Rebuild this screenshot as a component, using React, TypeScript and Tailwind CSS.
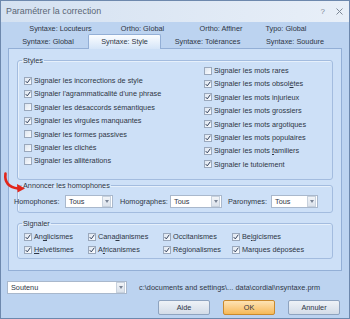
import React from 'react';

const font = "font-['Liberation_Sans',Arial,sans-serif]";

const Check = ({ on }: { on: boolean }) => (
  <span className="w-[8px] h-[8px] border border-[#9aa8bc] bg-gradient-to-br from-[#dde5ef] to-[#fbfcfe] flex items-center justify-center shrink-0">
    {on && (
      <svg width="6" height="6" viewBox="0 0 6 6">
        <path d="M0.7 3.1 L2.3 4.9 L5.3 0.7" fill="none" stroke="#34435e" strokeWidth="1" />
      </svg>
    )}
  </span>
);

const Opt = ({ on, children }: { on: boolean; children: React.ReactNode }) => (
  <div className="h-[13.4px] flex items-center gap-[2px] whitespace-nowrap">
    <Check on={on} />
    <span>{children}</span>
  </div>
);

const Combo = ({ w, value }: { w: string; value: string }) => (
  <div className={`${w} h-[13px] bg-white border border-[#a9b8cc] flex items-center`}>
    <span className="flex-1 pl-[3px] whitespace-nowrap overflow-hidden">{value}</span>
    <span className="w-[9px] h-[11px] mr-[1px] bg-gradient-to-b from-[#f1f4f8] to-[#dbe2eb] border border-[#c7d1dd] flex items-center justify-center">
      <svg width="4" height="3" viewBox="0 0 4 3">
        <path d="M0 0 H4 L2 3 Z" fill="#7a8596" />
      </svg>
    </span>
  </div>
);

const Group = ({ title, className = '', children }: { title: string; className?: string; children: React.ReactNode }) => (
  <fieldset className={`border border-[#a3bcdf] rounded-[3px] shadow-[inset_1px_1px_0_#e6f0fb] ${className}`}>
    <legend className="ml-[4px] px-[1px] leading-[9px]">{title}</legend>
    {children}
  </fieldset>
);

const Btn = ({ label, primary = false }: { label: string; primary?: boolean }) => (
  <div
    className={`w-[52px] h-[15px] rounded-[2px] border flex items-center justify-center ${
      primary
        ? 'border-[#c8892e] bg-gradient-to-b from-[#fde3b4] to-[#f6b955]'
        : 'border-[#8ea3bf] bg-gradient-to-b from-[#eef2f7] to-[#d3dce8]'
    }`}
  >
    {label}
  </div>
);

export default function App() {
  const left: [boolean, React.ReactNode][] = [
    [true, 'Signaler les incorrections de style'],
    [true, "Signaler l'agrammaticalité d'une phrase"],
    [false, 'Signaler les désaccords sémantiques'],
    [true, 'Signaler les virgules manquantes'],
    [false, 'Signaler les formes passives'],
    [false, 'Signaler les clichés'],
    [false, 'Signaler les allitérations'],
  ];
  const right: [boolean, React.ReactNode][] = [
    [false, 'Signaler les mots rares'],
    [true, <>Signaler les mots obsol<u>è</u>tes</>],
    [true, 'Signaler les mots injurieux'],
    [true, 'Signaler les mots grossiers'],
    [true, 'Signaler les mots argotiques'],
    [true, 'Signaler les mots populaires'],
    [true, <>Signaler les mots <u>f</u>amiliers</>],
    [true, 'Signaler le tutoiement'],
  ];

  return (
    <div className={`relative w-[350px] h-[319px] flex flex-col bg-[#bcd3f0] border border-[#6d88ad] overflow-hidden text-[7.3px] leading-none text-[#2e3645] ${font}`}>
      {/* title bar */}
      <div className="h-[21px] shrink-0 flex items-center bg-gradient-to-r from-[#d4e1f1] to-[#e8eff8] pl-[5px] pr-[6px]">
        <span className="flex-1 text-[8.9px] text-[#5a6675]">Paramétrer la correction</span>
        <span className="text-[8px] text-[#7d8896] mr-[11px]">?</span>
        <svg width="7" height="7" viewBox="0 0 7 7">
          <path d="M0.5 0.5 L6.5 6.5 M6.5 0.5 L0.5 6.5" stroke="#7d8896" strokeWidth="1" />
        </svg>
      </div>

      <div className="flex-1 flex flex-col px-[7px]">
        {/* tab rows */}
        <div className="h-[13px] flex items-center pl-[12px] text-center whitespace-nowrap">
          <span className="w-[81px]">Syntaxe: Locuteurs</span>
          <span className="w-[83px]">Ortho: Global</span>
          <span className="w-[74px]">Ortho: Affiner</span>
          <span className="w-[56px]">Typo: Global</span>
        </div>
        <div className="h-[13px] flex items-end text-center whitespace-nowrap relative z-10">
          <span className="w-[80px] h-[12px] flex items-center justify-center">Syntaxe: Global</span>
          <span className="w-[73px] h-[15px] -mb-[1px] flex items-center justify-center border border-b-0 border-[#93afd6] rounded-t-[2px] bg-gradient-to-b from-[#fbfdff] to-[#d5e5f8]">Syntaxe: Style</span>
          <span className="w-[93px] h-[12px] flex items-center justify-center">Syntaxe: Tolérances</span>
          <span className="w-[82px] h-[12px] flex items-center justify-center">Syntaxe: Soudure</span>
        </div>

        {/* tab panel */}
        <div className="h-[223px] border border-[#93afd6] bg-[#cde0f7] pt-[7px] pl-[8px] pr-[8px] flex flex-col">
          <Group title="Styles" className="h-[124px]">
            <div className="flex">
              <div className="w-[186px] pl-[6px] pt-[9px]">
                {left.map(([on, t], i) => (
                  <Opt key={i} on={on}>{t}</Opt>
                ))}
              </div>
              <div className="-mt-[1px]">
                {right.map(([on, t], i) => (
                  <Opt key={i} on={on}>{t}</Opt>
                ))}
              </div>
            </div>
          </Group>

          <Group title="Annoncer les homophones" className="h-[32px] mt-[1px]">
            <div className="flex items-center mt-[5px] -ml-[4px] whitespace-nowrap">
              <span className="w-[51px]">Homophones:</span>
              <Combo w="w-[48px]" value="Tous" />
              <span className="w-[50px] ml-[7px]">Homographes:</span>
              <Combo w="w-[52px]" value="Tous" />
              <span className="w-[43px] ml-[6px]">Paronymes:</span>
              <Combo w="w-[47px]" value="Tous" />
            </div>
          </Group>

          <Group title="Signaler" className="h-[40px] mt-[6px]">
            <div className="grid grid-cols-[64px_75px_69px_1fr] pl-[6px] mt-[2px]">
              <Opt on><>An<u>g</u>licismes</></Opt>
              <Opt on><>Cana<u>d</u>ianismes</></Opt>
              <Opt on>Occitanismes</Opt>
              <Opt on><>Be<u>l</u>gicismes</></Opt>
              <Opt on><><u>H</u>elvétismes</></Opt>
              <Opt on><>A<u>f</u>ricanismes</></Opt>
              <Opt on>Régionalismes</Opt>
              <Opt on>Marques déposées</Opt>
            </div>
          </Group>
        </div>

        {/* bottom */}
        <div className="flex items-center mt-[10px] -ml-[1px]">
          <Combo w="w-[120px]" value="Soutenu" />
          <span className="ml-[12px] whitespace-nowrap tracking-[0.05px]">c:\documents and settings\... data\cordial\nsyntaxe.prm</span>
        </div>
        <div className="flex justify-end gap-[13px] mt-[6px] pr-[2px]">
          <Btn label="Aide" />
          <Btn label="OK" primary />
          <Btn label="Annuler" />
        </div>
      </div>

      {/* red annotation arrow */}
      <svg className="absolute left-0 top-[170px]" width="28" height="24" viewBox="0 0 28 24">
        <path d="M4.5 2.5 C3.5 10 6 16 17 17.5" fill="none" stroke="#e2261b" strokeWidth="2.6" strokeLinecap="round" />
        <path d="M16 13 L24 17.5 L16.5 21.5 Z" fill="#e2261b" />
      </svg>
    </div>
  );
}
